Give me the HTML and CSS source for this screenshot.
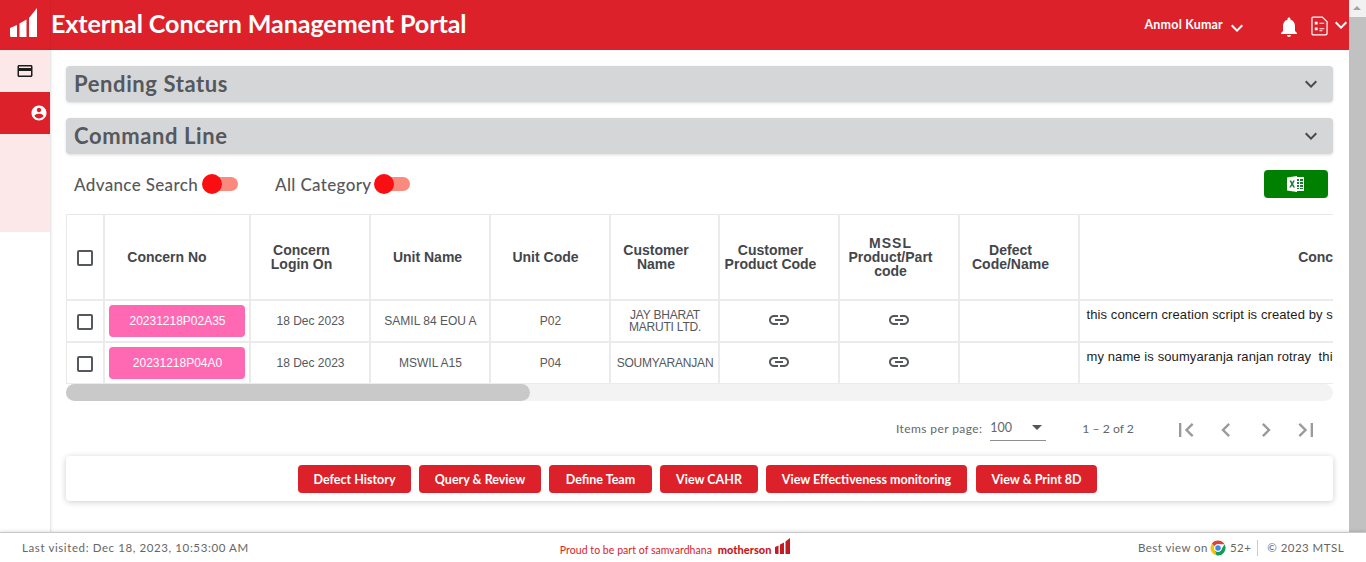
FILE: index.html
```html
<!DOCTYPE html>
<html lang="en">
<head>
    <meta charset="UTF-8">
    <meta name="viewport" content="width=device-width, initial-scale=1.0">
    <title>External Concern Management Portal</title>
    <link rel="stylesheet" href="styles.css">
</head>
<body>
    <svg class="sprite" xmlns="http://www.w3.org/2000/svg">
        <symbol id="i-down" viewBox="0 0 24 24"><path d="M16.59 8.59L12 13.17 7.41 8.59 6 10l6 6 6-6z"/></symbol>
        <symbol id="i-link" viewBox="0 0 24 24"><path d="M3.9 12c0-1.71 1.39-3.1 3.1-3.1h4V7H7c-2.76 0-5 2.24-5 5s2.24 5 5 5h4v-1.9H7c-1.71 0-3.1-1.39-3.1-3.1zM8 13h8v-2H8v2zm9-6h-4v1.9h4c1.71 0 3.1 1.39 3.1 3.1s-1.39 3.1-3.1 3.1h-4V17h4c2.76 0 5-2.24 5-5s-2.24-5-5-5z"/></symbol>
    </svg>

    <div class="window">
        <div class="app">
            <header class="topbar">
                <div class="logo-box">
                    <svg class="logo" viewBox="0 0 50 50"><path d="M10 28l7-3v12h-5.500q-1.500 0-1.500-1.500zM19.500 23.500l7-4V37h-7zM29 18l8-10v29h-8z"/></svg>
                </div>
                <h1 class="title">External Concern Management Portal</h1>
                <div class="user">Anmol Kumar</div>
                <svg class="top-chev"><use href="#i-down"/></svg>
                <svg class="bell" viewBox="0 0 24 24"><path d="M12 22c1.100 0 2-.9 2-2h-4c0 1.100.89 2 2 2zm6-6v-5c0-3.070-1.640-5.640-4.500-6.320V4c0-.83-.67-1.500-1.500-1.500s-1.500.67-1.500 1.500v.68C7.630 5.360 6 7.920 6 11v5l-2 2v1h16v-1l-2-2z"/></svg>
                <svg class="report" viewBox="0 0 18 21">
                    <path class="report-line" d="M2 1h10l5 5v12.500q0 1.500-1.500 1.500h-13q-1.500 0-1.500-1.500v-16q0-1.500 1-1.500z"/>
                    <path class="report-fill" d="M4 6h3v3H4zM4 12h3v3H4zM9 7h5v1H9zM9 13h5v1H9zM9 15h3v1H9z"/>
                </svg>
                <svg class="top-chev last"><use href="#i-down"/></svg>
            </header>

            <div class="body-row">
                <aside class="sidebar">
                    <div class="side-items">
                        <div class="side-item">
                            <svg class="side-icon" viewBox="0 0 24 24"><path d="M20 4H4c-1.110 0-1.990.89-1.990 2L2 18c0 1.110.89 2 2 2h16c1.110 0 2-.89 2-2V6c0-1.110-.89-2-2-2zm0 14H4v-6h16v6zm0-10H4V6h16v2z"/></svg>
                        </div>
                        <div class="side-item active">
                            <svg class="side-icon" viewBox="0 0 24 24"><path d="M12 2C6.480 2 2 6.480 2 12s4.480 10 10 10 10-4.480 10-10S17.520 2 12 2zm0 3c1.660 0 3 1.340 3 3s-1.340 3-3 3-3-1.340-3-3 1.340-3 3-3zm0 14.200c-2.500 0-4.710-1.280-6-3.220.03-1.990 4-3.080 6-3.080 1.990 0 5.970 1.090 6 3.080-1.290 1.940-3.500 3.220-6 3.220z"/></svg>
                        </div>
                    </div>
                </aside>

                <main class="content">
                    <div class="panel"><span>Pending Status</span><svg><use href="#i-down"/></svg></div>
                    <div class="panel"><span>Command Line</span><svg><use href="#i-down"/></svg></div>

                    <div class="filters">
                        <div class="filter">Advance Search<span class="toggle"></span></div>
                        <div class="filter">All Category<span class="toggle"></span></div>
                        <button class="excel-btn">
                            <svg viewBox="0 0 18 18">
                                <path class="xl-white" d="M7 2h10v14H7z"/>
                                <path class="xl-green" d="M10 4h2v2h-2zM13 4h3v2h-3zM10 7h2v2h-2zM13 7h3v2h-3zM10 10h2v2h-2zM13 10h3v2h-3zM10 13h2v1h-2zM13 13h3v1h-3z"/>
                                <path class="xl-white" d="M0 2.500L10 1v16L0 15.500z"/>
                                <path class="xl-green" d="M2.500 5.500h1.800L5.200 7.600 6.200 5.500h1.700L6.100 9l1.900 3.500H6.200L5.100 10.300 4 12.500H2.300L4.200 9z"/>
                            </svg>
                        </button>
                    </div>

                    <div class="table-wrap">
                        <table class="grid">
                            <colgroup>
                                <col class="c-check"><col class="c-no"><col class="c-std"><col class="c-std"><col class="c-std">
                                <col class="c-cust"><col class="c-std"><col class="c-std"><col class="c-std"><col class="c-desc">
                            </colgroup>
                            <thead>
                                <tr>
                                    <th><span class="box"></span></th>
                                    <th class="h-no">Concern No</th>
                                    <th class="h-wide">Concern<br>Login On</th>
                                    <th class="h-unit">Unit Name</th>
                                    <th class="h-code">Unit Code</th>
                                    <th class="h-wide">Customer<br>Name</th>
                                    <th class="h-wide">Customer<br>Product Code</th>
                                    <th class="h-wide"><span class="spaced">MSSL</span><br>Product/Part<br>code</th>
                                    <th class="h-wide">Defect<br>Code/Name</th>
                                    <th class="h-desc">Concern Description</th>
                                </tr>
                            </thead>
                            <tbody>
                                <tr>
                                    <td class="plain"><span class="box"></span></td>
                                    <td class="no-cell"><a class="concern-no">20231218P02A35</a></td>
                                    <td>18 Dec 2023</td>
                                    <td>SAMIL 84 EOU A</td>
                                    <td>P02</td>
                                    <td class="tight">JAY BHARAT<br>MARUTI LTD.</td>
                                    <td class="plain"><svg class="link"><use href="#i-link"/></svg></td>
                                    <td class="plain"><svg class="link"><use href="#i-link"/></svg></td>
                                    <td></td>
                                    <td class="desc">this concern creation script is created by soumyaranjan for testing purpose only</td>
                                </tr>
                                <tr>
                                    <td class="plain"><span class="box"></span></td>
                                    <td class="no-cell"><a class="concern-no">20231218P04A0</a></td>
                                    <td>18 Dec 2023</td>
                                    <td>MSWIL A15</td>
                                    <td>P04</td>
                                    <td class="tight">SOUMYARANJAN</td>
                                    <td class="plain"><svg class="link"><use href="#i-link"/></svg></td>
                                    <td class="plain"><svg class="link"><use href="#i-link"/></svg></td>
                                    <td></td>
                                    <td class="desc">my name is soumyaranja ranjan rotray&nbsp; this is a test concern for the portal</td>
                                </tr>
                            </tbody>
                        </table>
                    </div>
                    <div class="h-scroll"><div class="h-thumb"></div></div>

                    <div class="pager">
                        <span class="pager-label">Items per page:</span>
                        <div class="page-select"><span>100</span><i class="caret"></i></div>
                        <span class="pager-range">1 – 2 of 2</span>
                        <div class="pager-btns">
                            <svg viewBox="0 0 24 24"><path d="M18.410 16.590L13.820 12l4.590-4.590L17 6l-6 6 6 6zM6 6h2v12H6z"/></svg>
                            <svg viewBox="0 0 24 24"><path d="M15.410 7.410L14 6l-6 6 6 6 1.410-1.410L10.830 12z"/></svg>
                            <svg viewBox="0 0 24 24"><path d="M10 6L8.590 7.410 13.170 12l-4.580 4.590L10 18l6-6z"/></svg>
                            <svg viewBox="0 0 24 24"><path d="M5.590 7.410L10.180 12l-4.590 4.590L7 18l6-6-6-6zM16 6h2v12h-2z"/></svg>
                        </div>
                    </div>

                    <div class="actions">
                        <button class="action b1">Defect History</button>
                        <button class="action b2">Query &amp; Review</button>
                        <button class="action b3">Define Team</button>
                        <button class="action b4">View CAHR</button>
                        <button class="action b5">View Effectiveness monitoring</button>
                        <button class="action b6">View &amp; Print 8D</button>
                    </div>
                </main>
            </div>
        </div>

        <div class="v-scroll">
            <div class="v-arrow"></div>
            <div class="v-thumb"></div>
        </div>
    </div>

    <footer class="footer">
        <div class="foot-left">Last visited: Dec 18, 2023, 10:53:00 AM</div>
        <div class="foot-mid">
            Proud to be part of samvardhana <b>motherson</b>
            <svg class="mini-logo" viewBox="0 0 15 16"><path d="M0 9l3.500-1.500V16H1q-1 0-1-1zM5 6.500L9 4.500V16H5zM10.500 3.500L15 0v16h-4.500z"/></svg>
        </div>
        <div class="foot-right">
            <span>Best view on</span>
            <svg class="chrome" viewBox="0 0 32 32">
                <path fill="#db4437" d="M16 1a15 15 0 0 1 13 7.500H16a7.500 7.500 0 0 0-7 4.700L3.600 7.500A15 15 0 0 1 16 1z"/>
                <path fill="#f4c20d" d="M3.600 7.500L9 13.200a7.500 7.500 0 0 0 .5 6.500l3.300 10.900A15 15 0 0 1 3.600 7.500z"/>
                <path fill="#0f9d58" d="M9.500 19.700a7.500 7.500 0 0 0 13 0L29 8.500a15 15 0 0 1-16.200 22.100z"/>
                <circle cx="16" cy="16" r="7.500" fill="#fff"/>
                <circle cx="16" cy="16" r="5.500" fill="#4285f4"/>
            </svg>
            <span>52+</span>
            <span class="foot-sep"></span>
            <span>© 2023 MTSL</span>
        </div>
    </footer>
</body>
</html>
```

FILE: styles.css
```css
* {
    box-sizing: border-box;
}
html, body {
    margin: 0;
    height: 100%;
    overflow: hidden;
}
body {
    font-family: Lato, "Open Sans", sans-serif;
    color: #4b4f54;
    background: #fff;
    display: flex;
    flex-direction: column;
}
.sprite {
    display: none;
}
.window {
    height: 532px;
    display: flex;
}
.app {
    flex: 1;
    min-width: 0;
    display: flex;
    flex-direction: column;
}

/* header */
.topbar {
    height: 50px;
    background: #dc212a;
    color: #fff;
    display: flex;
    align-items: center;
}
.logo-box {
    width: 51px;
    height: 50px;
    border-right: 1px solid #cf2029;
}
.logo {
    width: 50px;
    height: 50px;
    fill: #fff;
    display: block;
}
.title {
    margin: 0 0 4px;
    font-size: 25.100px;
    font-weight: 700;
    flex: 1;
    letter-spacing: -0.1px;
}
.user {
    font-size: 12.500px;
    font-weight: 700;
    margin-bottom: 2px;
    letter-spacing: 0.2px;
}
.top-chev {
    width: 24px;
    height: 24px;
    fill: #fff;
    margin: 6px 0 0 2px;
}
.top-chev.last {
    margin: 0 -4px 0 1px;
}
.bell {
    width: 24px;
    height: 24px;
    fill: #fff;
    margin: 4px 0 0 28px;
}
.report {
    width: 17px;
    height: 20px;
    margin: 2px 0 0 10px;
}
.report-line {
    fill: none;
    stroke: #fff;
    stroke-width: 1.300;
}
.report-fill {
    fill: #fff;
}

.body-row {
    flex: 1;
    display: flex;
    min-height: 0;
}

/* sidebar */
.sidebar {
    width: 51px;
    border-right: 1px solid #e9e9e9;
    box-shadow: 1px 0 2px rgba(0, 0, 0, 0.06);
}
.side-items {
    height: 182px;
    background: #fce8e9;
}
.side-item {
    height: 42px;
    display: flex;
    align-items: center;
    justify-content: center;
    color: #1c1c1c;
}
.side-icon {
    width: 18px;
    height: 18px;
    fill: currentColor;
}
.side-item.active {
    background: #dc212a;
    color: #fff;
    justify-content: flex-end;
    padding-right: 2px;
}

/* content */
.content {
    flex: 1;
    min-width: 0;
    padding: 16px 16px 0 15px;
}
.panel {
    height: 36px;
    margin-bottom: 16px;
    padding: 0 10px 2px 8px;
    background: #d5d6d8;
    border-radius: 4px;
    box-shadow: 0 1px 3px rgba(0, 0, 0, 0.14);
    display: flex;
    align-items: center;
    justify-content: space-between;
    font-size: 22px;
    font-weight: 700;
    letter-spacing: 0.6px;
    color: #55585c;
}
.panel svg {
    width: 24px;
    height: 24px;
    fill: #4a4a4a;
    margin-top: 2px;
}
.filters {
    height: 28px;
    margin-bottom: 16px;
    display: flex;
    align-items: center;
    padding-left: 8px;
}
.filter {
    display: flex;
    align-items: center;
    font-size: 17px;
    font-weight: 500;
    color: #55585c;
    margin-right: 37px;
    letter-spacing: 0.35px;
}
.toggle {
    position: relative;
    display: block;
    width: 32px;
    height: 14px;
    margin-left: 8px;
    background: #fb8a7e;
    border-radius: 7px;
}
.filter + .filter .toggle {
    margin-left: 7px;
}
.toggle::before {
    content: "";
    position: absolute;
    left: -4px;
    top: -3px;
    width: 20px;
    height: 20px;
    border-radius: 50%;
    background: #f90f12;
}
.excel-btn {
    margin-left: auto;
    margin-right: 5px;
    width: 64px;
    height: 28px;
    background: #008000;
    border: 0;
    border-radius: 4px;
    display: flex;
    align-items: center;
    justify-content: center;
    padding: 0;
}
.excel-btn svg {
    width: 18px;
    height: 18px;
}
.xl-white {
    fill: #fff;
}
.xl-green {
    fill: #1d7a3a;
}

/* table */
.table-wrap {
    overflow: hidden;
    height: 170px;
}
.grid {
    table-layout: fixed;
    border-collapse: collapse;
    width: 1584px;
    font-family: "Liberation Sans", Arial, sans-serif;
    border-top: 1px solid #e8e8e8;
    border-left: 1px solid #e8e8e8;
}
.c-check { width: 37px; }
.c-no { width: 146px; }
.c-std { width: 120px; }
.c-cust { width: 109px; }
.c-desc { width: 572px; }
.grid th, .grid td {
    border-left: 2px solid #ebebeb;
    border-bottom: 2px solid #ebebeb;
    padding: 0;
    text-align: center;
    vertical-align: middle;
}
.grid th:first-child, .grid td:first-child {
    border-left: 0;
}
.grid th {
    height: 85px;
    padding-top: 1px;
    font-size: 14px;
    line-height: 14px;
    font-weight: 700;
    color: #44464a;
}
.grid td {
    height: 42px;
    padding-left: 2px;
    font-size: 12px;
    line-height: 12px;
    color: #55585c;
}
.grid td.plain {
    padding-left: 0;
}
.grid tbody tr:last-child td {
    border-bottom-width: 1px;
}
.grid th.h-no {
    padding-right: 19px;
}
.grid th.h-wide {
    padding-right: 16px;
}
.grid th.h-unit {
    padding-right: 4px;
}
.grid th.h-code {
    padding-right: 8px;
}
.grid th.h-desc {
    padding-left: 4px;
}
.spaced {
    letter-spacing: 1px;
}
.grid td.tight {
    letter-spacing: -0.2px;
    white-space: nowrap;
}
.box {
    display: inline-block;
    width: 16px;
    height: 16px;
    margin-top: 2px;
    border: 2px solid #55585c;
    border-radius: 2px;
    vertical-align: middle;
}
.grid td.no-cell {
    padding: 0 4px;
}
.concern-no {
    display: block;
    height: 32px;
    line-height: 32px;
    padding-left: 2px;
    background: #ff69b4;
    color: #fff;
    border-radius: 4px;
}
.link {
    display: block;
    width: 24px;
    height: 24px;
    margin: -1px auto 0;
    fill: #55585c;
}
.grid td.desc {
    text-align: left;
    vertical-align: top;
    padding: 8px 6px 0 7px;
    font-size: 13px;
    letter-spacing: 0.1px;
    color: #1c1c1c;
    white-space: nowrap;
    overflow: hidden;
}
.h-scroll {
    height: 17px;
    background: #f3f3f3;
    border-radius: 9px;
}
.h-thumb {
    width: 464px;
    height: 17px;
    background: #c9c9c9;
    border-radius: 9px;
}

/* pager */
.pager {
    height: 55px;
    display: flex;
    align-items: center;
    font-size: 12px;
    color: #666;
}
.pager-label {
    margin-left: 830px;
    letter-spacing: 0.4px;
}
.page-select {
    width: 56px;
    height: 25px;
    margin-left: 8px;
    border-bottom: 1px solid #8f8f8f;
    display: flex;
    align-items: flex-start;
    justify-content: space-between;
    padding: 4px 4px 0 0;
    font-size: 12.500px;
}
.caret {
    margin-top: 5px;
    border-left: 5px solid transparent;
    border-right: 5px solid transparent;
    border-top: 5px solid #555;
}
.pager-range {
    margin-left: 36px;
    font-size: 12.200px;
}
.pager-btns {
    display: flex;
    margin: 2px 0 0 38px;
    gap: 12px;
}
.pager-btns svg {
    width: 28px;
    height: 28px;
    fill: #9a9a9a;
}

/* action card */
.actions {
    height: 45px;
    background: #fff;
    border-radius: 4px;
    box-shadow: 0 1px 6px rgba(0, 0, 0, 0.2);
    display: flex;
    align-items: center;
    padding-left: 232px;
}
.action {
    height: 28px;
    margin-right: 8px;
    padding: 1px 0 0;
    border: 0;
    border-radius: 4px;
    background: #dc212a;
    color: #fff;
    font-family: Lato, "Open Sans", sans-serif;
    font-size: 12.500px;
    font-weight: 700;
}
.b1 { width: 113px; }
.b2 { width: 122px; }
.b3 { width: 103px; }
.b4 { width: 98px; }
.b5 { width: 201px; }
.b6 { width: 121px; margin-left: 1px; }

/* fake page scrollbar */
.v-scroll {
    width: 17px;
    background: #f1f1f1;
}
.v-arrow {
    height: 17px;
    position: relative;
}
.v-arrow::before {
    content: "";
    position: absolute;
    left: 4px;
    top: 6px;
    border-left: 4px solid transparent;
    border-right: 4px solid transparent;
    border-bottom: 4px solid #a3a3a3;
}
.v-thumb {
    height: 515px;
    background: #c1c1c1;
}

/* footer */
.footer {
    height: 30px;
    display: flex;
    align-items: center;
    border-top: 1px solid #c9c9c9;
    box-shadow: 0 -1px 3px rgba(0, 0, 0, 0.12);
    background: #fff;
    position: relative;
    font-size: 11.500px;
    color: #666;
    padding: 0 22px;
}
.foot-left {
    width: 515px;
    letter-spacing: 0.6px;
    flex: none;
    margin-right: -10px;
}
.foot-mid {
    color: #dc212a;
    font-size: 10.500px;
    letter-spacing: 0.05px;
    display: flex;
    align-items: flex-end;
    white-space: pre;
    margin-bottom: 7px;
}
.foot-mid b {
    color: #c51a24;
    font-size: 11px;
    font-weight: 900;
    margin-left: 3px;
}
.mini-logo {
    width: 15px;
    height: 16px;
    fill: #c51a24;
    margin: 0 0 2px 3px;
}
.foot-right {
    margin-left: auto;
    display: flex;
    align-items: center;
    letter-spacing: 0.45px;
}
.chrome {
    width: 16px;
    height: 16px;
    margin: 0 4px 0 2px;
}
.foot-sep {
    width: 1px;
    height: 16px;
    background: #ccc;
    margin: 0 9px 0 6px;
}
```
